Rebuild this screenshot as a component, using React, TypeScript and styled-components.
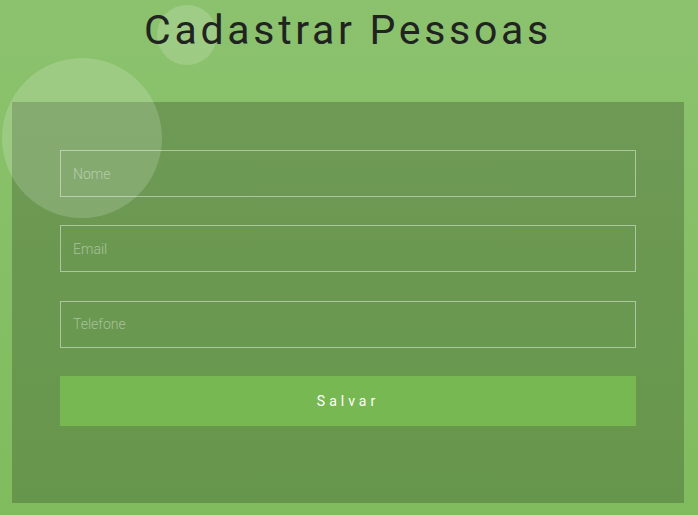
import React from "react";
import styled, { createGlobalStyle } from "styled-components";

const Global = createGlobalStyle`
  html, body { margin: 0; padding: 0; }
  body {
    font-family: Roboto, "Liberation Sans", sans-serif;
    background: linear-gradient(to bottom, #8cc26e 0%, #80bc5e 100%);
    min-height: 515px;
    overflow: hidden;
  }
`;

const Page = styled.div`
  position: relative;
  width: 698px;
  height: 515px;
  box-sizing: border-box;
  padding: 0 14px 12px 12px;
  display: flex;
  flex-direction: column;
`;

const Title = styled.h1`
  margin: 0;
  height: 102px;
  box-sizing: border-box;
  padding-top: 6px;
  text-align: center;
  font-family: Roboto, sans-serif;
  font-weight: 400;
  font-size: 41px;
  line-height: 48px;
  letter-spacing: 3.7px;
  color: #1f2420;
  position: relative;
  z-index: 1;
`;

const Card = styled.form`
  flex: 1;
  background: rgba(0, 0, 0, 0.2);
  padding: 48px 48px 0 48px;
  display: flex;
  flex-direction: column;
  gap: 28.33px;
`;

const Field = styled.input`
  display: block;
  box-sizing: border-box;
  width: 100%;
  height: 47px;
  margin: 0;
  padding: 0 12px;
  background: transparent;
  border: 1px solid rgba(255, 255, 255, 0.45);
  font-family: Roboto, sans-serif;
  font-weight: 300;
  font-size: 14px;
  color: #fff;
  outline: none;
  &::placeholder {
    color: rgba(255, 255, 255, 0.42);
  }
`;

const Submit = styled.button`
  height: 50px;
  border: 0;
  background: #77b852;
  color: #fff;
  font-family: Roboto, sans-serif;
  font-weight: 400;
  font-size: 14px;
  letter-spacing: 4px;
  cursor: pointer;
`;

const Bubble = styled.span<{ $size: number; $x: number; $y: number }>`
  position: absolute;
  left: ${(p) => p.$x}px;
  top: ${(p) => p.$y}px;
  width: ${(p) => p.$size}px;
  height: ${(p) => p.$size}px;
  border-radius: 50%;
  background: rgba(255, 255, 255, 0.17);
  pointer-events: none;
`;

export default function App() {
  return (
    <>
      <Global />
      <Page>
        <Title>Cadastrar Pessoas</Title>
        <Card onSubmit={(e) => e.preventDefault()}>
          <Field placeholder="Nome" />
          <Field placeholder="Email" />
          <Field placeholder="Telefone" />
          <Submit type="submit">Salvar</Submit>
        </Card>
        <Bubble $size={60} $x={157} $y={5} />
        <Bubble $size={160} $x={2} $y={58} />
      </Page>
    </>
  );
}
